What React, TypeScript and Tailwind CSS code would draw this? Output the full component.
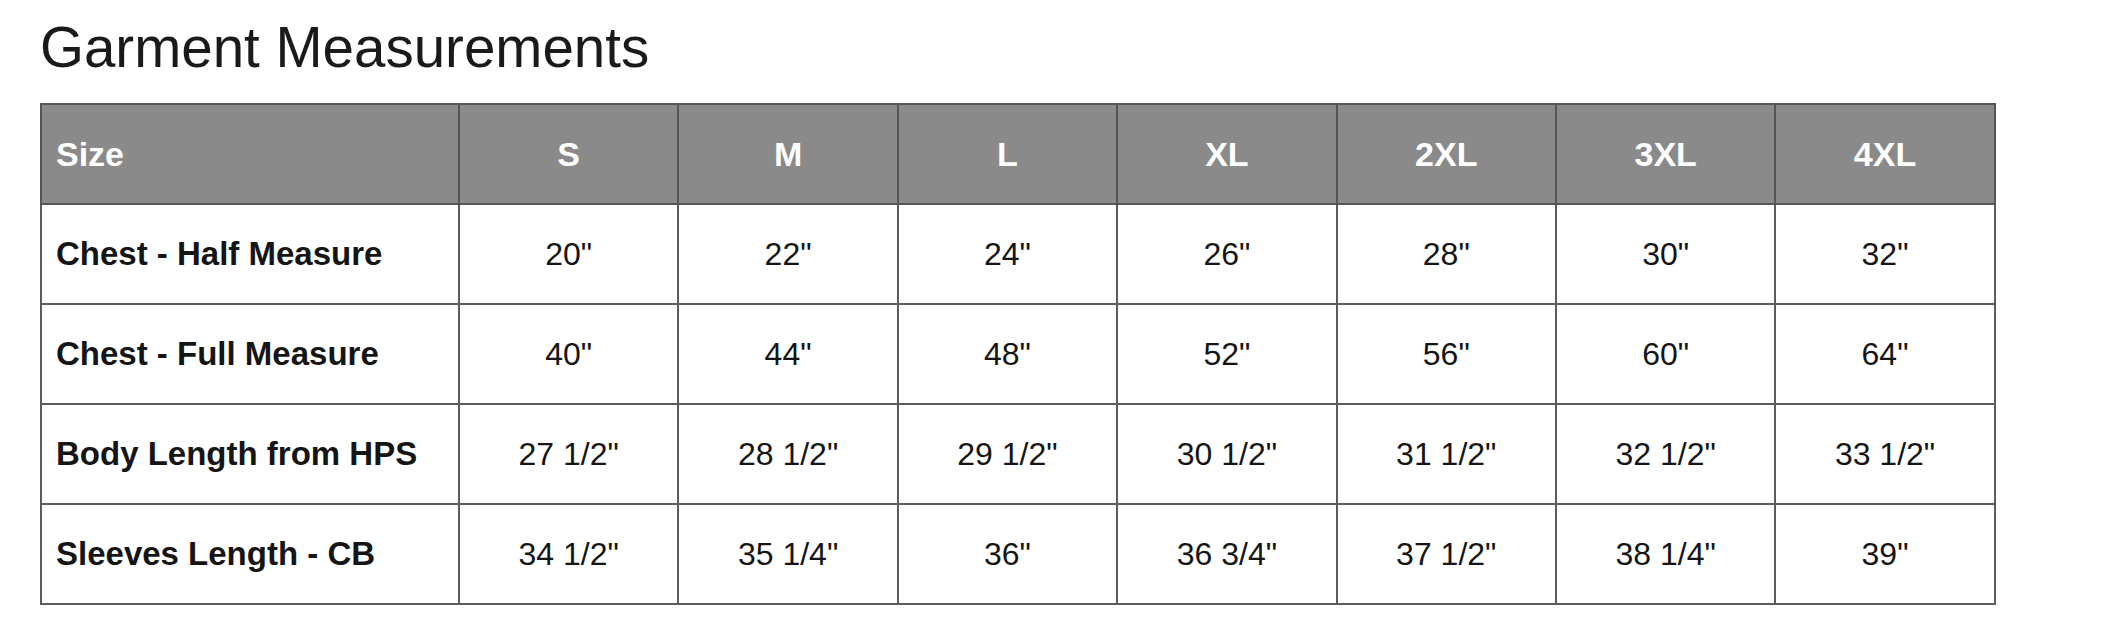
import React from "react";

const sizes = ["S", "M", "L", "XL", "2XL", "3XL", "4XL"];
const rows: [string, string[]][] = [
  ["Chest - Half Measure", ['20"', '22"', '24"', '26"', '28"', '30"', '32"']],
  ["Chest - Full Measure", ['40"', '44"', '48"', '52"', '56"', '60"', '64"']],
  ["Body Length from HPS", ['27 1/2"', '28 1/2"', '29 1/2"', '30 1/2"', '31 1/2"', '32 1/2"', '33 1/2"']],
  ["Sleeves Length - CB", ['34 1/2"', '35 1/4"', '36"', '36 3/4"', '37 1/2"', '38 1/4"', '39"']],
];

export default function App() {
  return (
    <div
      className="w-[2126px] h-[640px] bg-white pl-[40px] pt-[16px]"
      style={{ fontFamily: '"Liberation Sans", Arial, sans-serif' }}
    >
      <h1 className="text-[56.5px] leading-[64px] text-[#1a1a1a] font-normal">Garment Measurements</h1>
      <table className="mt-[23px] w-[1954px] table-fixed border-collapse">
        <colgroup>
          <col className="w-[418px]" />
          {sizes.map((s) => (
            <col key={s} className="w-[219.4px]" />
          ))}
        </colgroup>
        <thead>
          <tr className="h-[100px] bg-[#8a8a8a]">
            <th className="border-2 border-[#555] text-left pl-[14px] text-white text-[34px] font-bold">Size</th>
            {sizes.map((s) => (
              <th key={s} className="border-2 border-[#555] text-center text-white text-[34px] font-bold">
                {s}
              </th>
            ))}
          </tr>
        </thead>
        <tbody>
          {rows.map(([label, vals]) => (
            <tr key={label} className="h-[100px] bg-white">
              <td className="border-2 border-[#5c5c5c] text-left pl-[14px] text-[#151515] text-[33px] font-bold">
                {label}
              </td>
              {vals.map((v, i) => (
                <td key={i} className="border-2 border-[#5c5c5c] text-center text-[#151515] text-[32px]">
                  {v}
                </td>
              ))}
            </tr>
          ))}
        </tbody>
      </table>
    </div>
  );
}
